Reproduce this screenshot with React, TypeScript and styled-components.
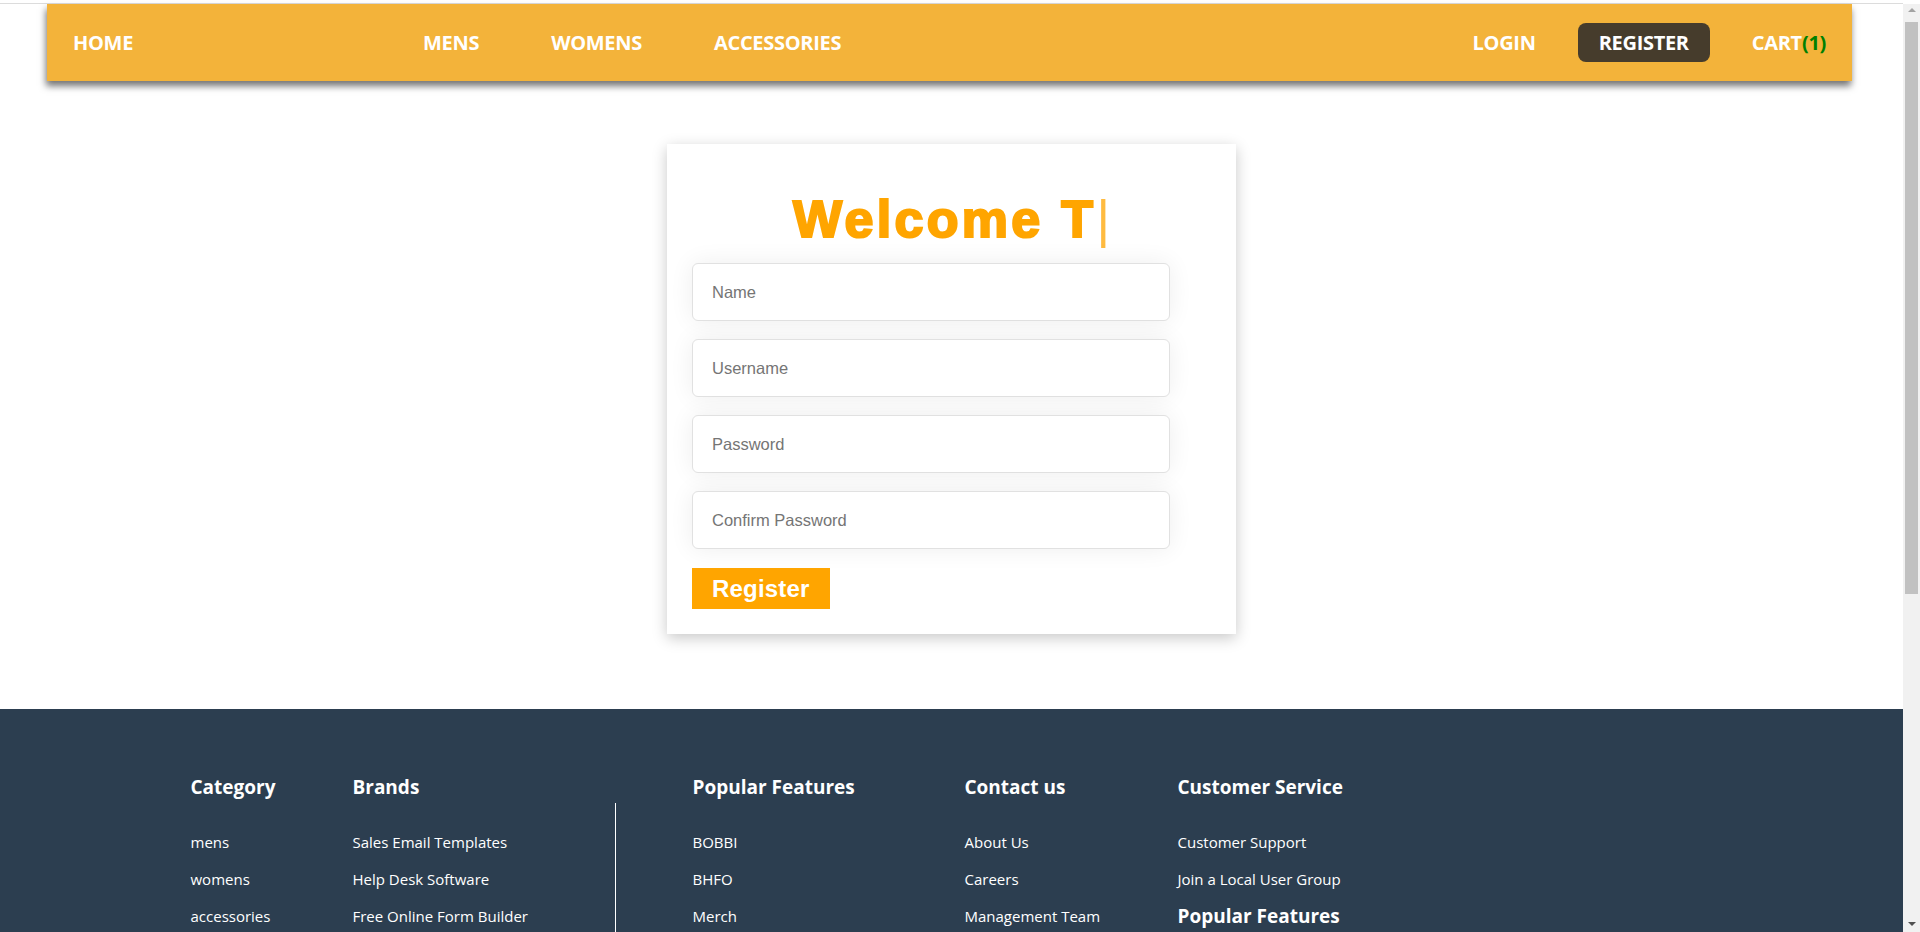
import React from 'react';
import styled, { createGlobalStyle } from 'styled-components';

const GlobalStyle = createGlobalStyle`
  html, body {
    margin: 0;
    padding: 0;
    background: #fff;
    overflow: hidden;
  }
  body {
    font-family: "Open Sans", "Noto Sans", sans-serif;
  }
`;

const Shell = styled.div`
  display: flex;
  height: 100vh;
  overflow: hidden;
`;

const Page = styled.div`
  flex: 1;
  min-width: 0;
`;

// classic window scrollbar on the right edge
const ScrollRail = styled.div`
  flex: 0 0 17px;
  display: flex;
  flex-direction: column;
  align-items: center;
  background: #f1f1f1;
  border-top: 4px solid #fff;
`;

const Arrow = styled.span<{ $down?: boolean }>`
  width: 0;
  height: 0;
  margin: ${(p) => (p.$down ? 'auto 0 6px' : '4px 0 0')};
  border-left: 4px solid transparent;
  border-right: 4px solid transparent;
  ${(p) =>
    p.$down ? 'border-top: 4px solid #505050;' : 'border-bottom: 4px solid #a3a3a3;'}
`;

const Thumb = styled.div`
  width: 13px;
  height: 572px;
  margin-top: 10px;
  background: #c1c1c1;
`;

const TopRule = styled.div`
  height: 3px;
  border-bottom: 1px solid #dcdcdc;
`;

const NavBar = styled.nav`
  height: 77px;
  margin: 0 51px 0 47px;
  padding: 0 26px;
  display: flex;
  align-items: center;
  background-color: #f3b33a;
  box-shadow: -1px 5px 7px rgba(0, 0, 0, 0.55);
`;

const HomeSlot = styled.div`
  flex: 0 0 350px;
`;

const NavGroup = styled.div<{ $gap: number; $right?: boolean }>`
  display: flex;
  align-items: center;
  gap: ${(p) => p.$gap}px;
  margin-left: ${(p) => (p.$right ? 'auto' : '0')};
`;

const NavLink = styled.a<{ $boxed?: boolean }>`
  color: #fff;
  font-size: 20px;
  font-weight: 700;
  letter-spacing: -0.3px;
  text-decoration: none;
  text-transform: uppercase;
  line-height: 39px;
  padding: ${(p) => (p.$boxed ? '0 21px' : '0')};
  border-radius: 8px;
  background-color: ${(p) => (p.$boxed ? '#463c2c' : 'transparent')};
  cursor: pointer;
`;

const CartCount = styled.span`
  color: #008000;
`;

const Main = styled.main`
  display: flex;
  justify-content: center;
  padding: 63px 0 75px;
`;

const Card = styled.form`
  width: 569px;
  box-sizing: border-box;
  padding: 25px;
  display: flex;
  flex-direction: column;
  align-items: flex-start;
  background: #fff;
  box-shadow: 0 4px 14px rgba(0, 0, 0, 0.22);
`;

const Title = styled.h1`
  align-self: stretch;
  margin: 21px 0 15px;
  text-align: center;
  font-family: "Liberation Sans", Arial, sans-serif;
  font-size: 52px;
  line-height: 58px;
  font-weight: 700;
  letter-spacing: 3.3px;
  color: #ffa500;
  -webkit-text-stroke: 2.2px #ffa500;
`;

const Caret = styled.span`
  font-weight: 400;
  color: #ffbb40;
  -webkit-text-stroke: 0;
  letter-spacing: 0;
`;

const Fields = styled.div`
  width: 478px;
  display: flex;
  flex-direction: column;
  gap: 18px;
`;

const Input = styled.input`
  height: 58px;
  box-sizing: border-box;
  padding: 0 19px;
  border: 1px solid #e1e1e1;
  border-radius: 6px;
  box-shadow: 0 0 24px rgba(0, 0, 0, 0.07);
  font-family: "Liberation Sans", Arial, sans-serif;
  font-size: 16.5px;
  outline: none;
  &::placeholder {
    color: #757575;
  }
`;

const SubmitButton = styled.button`
  margin-top: 19px;
  height: 41px;
  padding: 0 20px;
  border: none;
  background: #ffa500;
  color: #fff;
  font-family: "Liberation Sans", Arial, sans-serif;
  font-size: 24px;
  font-weight: 700;
  letter-spacing: 0.2px;
  cursor: pointer;
`;

const Footer = styled.footer`
  background: #2c3e50;
  color: #fff;
  padding: 65px 0 120px;
`;

const FooterInner = styled.div`
  width: 1522px;
  margin: 0 auto;
  display: flex;
  align-items: flex-start;
`;

const Column = styled.div<{ $w?: number }>`
  flex: 0 0 ${(p) => (p.$w ? `${p.$w}px` : 'auto')};
`;

const Divider = styled.div`
  align-self: stretch;
  width: 1px;
  margin: 29px 77px 0 0;
  background: #fff;
`;

const ColTitle = styled.h4<{ $inline?: boolean }>`
  margin: ${(p) => (p.$inline ? '0' : '0 0 24px')};
  font-size: 19px;
  font-weight: 700;
  line-height: ${(p) => (p.$inline ? '37px' : '26px')};
`;

const LinkList = styled.ul`
  list-style: none;
  margin: 0;
  padding: 0;
`;

const FooterLink = styled.li`
  font-size: 15px;
  line-height: 37px;
  white-space: nowrap;
`;

const Copy = styled.p`
  margin: 80px 0 0;
  text-align: center;
  font-size: 14px;
  color: #c8d0d9;
`;

const columns = [
  { title: 'Category', w: 162, links: ['mens', 'womens', 'accessories', 'kids', 'shoes'] },
  {
    title: 'Brands',
    w: 262,
    links: ['Sales Email Templates', 'Help Desk Software', 'Free Online Form Builder', 'Online Surveys', 'Live Chat'],
  },
];

const columns2 = [
  { title: 'Popular Features', w: 272, links: ['BOBBI', 'BHFO', 'Merch', 'Gift Cards', 'Deals'] },
  { title: 'Contact us', w: 213, links: ['About Us', 'Careers', 'Management Team', 'Press', 'Investors'] },
];

export default function App() {
  return (
    <Shell>
      <GlobalStyle />
      <Page>
        <TopRule />
        <NavBar>
          <HomeSlot>
            <NavLink>Home</NavLink>
          </HomeSlot>
          <NavGroup $gap={72}>
            <NavLink>Mens</NavLink>
            <NavLink>Womens</NavLink>
            <NavLink>Accessories</NavLink>
          </NavGroup>
          <NavGroup $gap={42} $right>
            <NavLink>Login</NavLink>
            <NavLink $boxed>Register</NavLink>
            <NavLink>
              Cart<CartCount>(1)</CartCount>
            </NavLink>
          </NavGroup>
        </NavBar>

        <Main>
          <Card onSubmit={(e) => e.preventDefault()}>
            <Title>
              Welcome T<Caret>|</Caret>
            </Title>
            <Fields>
              <Input type="text" placeholder="Name" />
              <Input type="text" placeholder="Username" />
              <Input type="password" placeholder="Password" />
              <Input type="password" placeholder="Confirm Password" />
            </Fields>
            <SubmitButton type="submit">Register</SubmitButton>
          </Card>
        </Main>

        <Footer>
          <FooterInner>
            {columns.map((c) => (
              <Column key={c.title} $w={c.w}>
                <ColTitle>{c.title}</ColTitle>
                <LinkList>
                  {c.links.map((l) => (
                    <FooterLink key={l}>{l}</FooterLink>
                  ))}
                </LinkList>
              </Column>
            ))}
            <Divider />
            {columns2.map((c) => (
              <Column key={c.title} $w={c.w}>
                <ColTitle>{c.title}</ColTitle>
                <LinkList>
                  {c.links.map((l) => (
                    <FooterLink key={l}>{l}</FooterLink>
                  ))}
                </LinkList>
              </Column>
            ))}
            <Column>
              <ColTitle>Customer Service</ColTitle>
              <LinkList>
                <FooterLink>Customer Support</FooterLink>
                <FooterLink>Join a Local User Group</FooterLink>
              </LinkList>
              <ColTitle $inline>Popular Features</ColTitle>
              <LinkList>
                <FooterLink>Free Shipping</FooterLink>
                <FooterLink>Easy Returns</FooterLink>
              </LinkList>
            </Column>
          </FooterInner>
          <Copy>© 2023 All rights reserved</Copy>
        </Footer>
      </Page>
      <ScrollRail>
        <Arrow />
        <Thumb />
        <Arrow $down />
      </ScrollRail>
    </Shell>
  );
}
